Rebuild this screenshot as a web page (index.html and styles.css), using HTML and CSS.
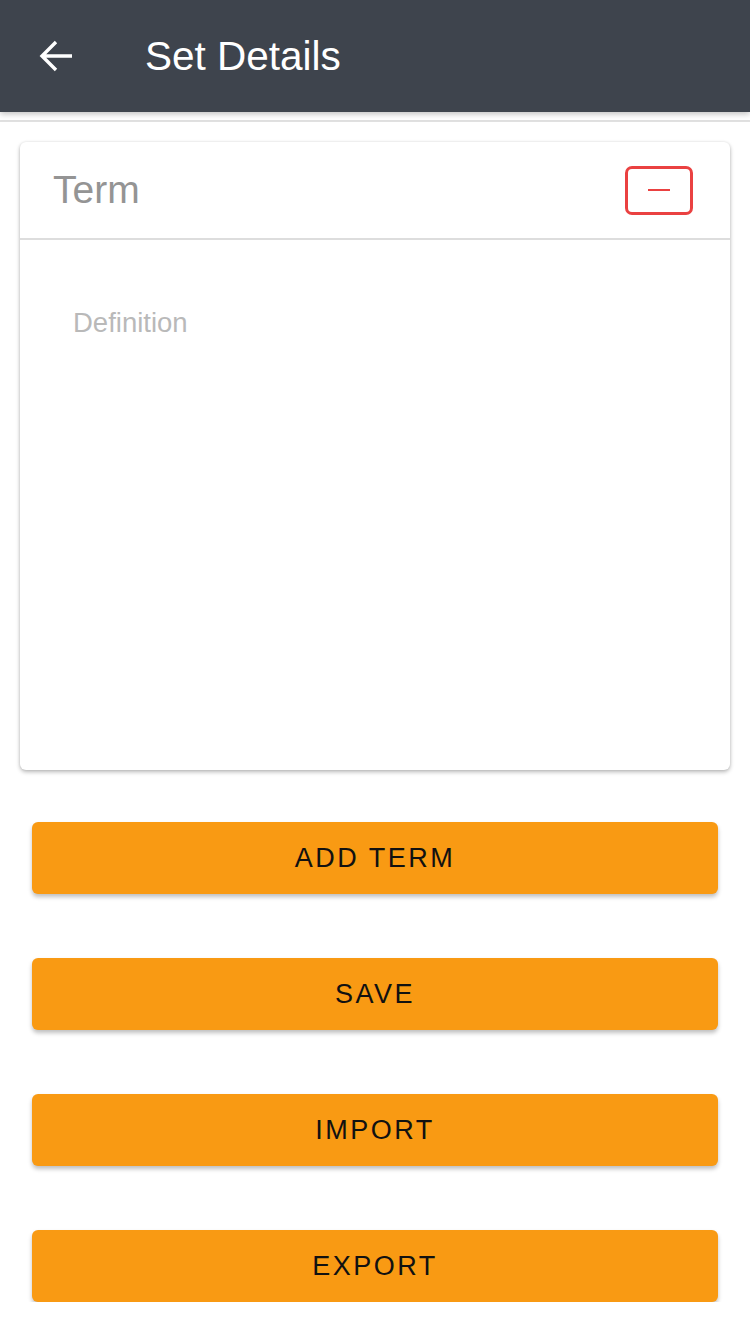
FILE: index.html
```html
<!DOCTYPE html>
<html>
<head>
<meta charset="utf-8">
<link rel="stylesheet" href="styles.css">
</head>
<body>
<header class="topbar">
  <svg class="back" width="34" height="34" viewBox="0 0 34 34">
    <path d="M33 17H3M17 3L3 17L17 31" fill="none" stroke="#fff" stroke-width="3.4" stroke-linecap="butt" stroke-linejoin="miter"/>
  </svg>
  <h1 class="title">Set Details</h1>
</header>
<div class="divider"></div>
<main class="content">
  <section class="card">
    <div class="card-head">
      <span class="term">Term</span>
      <button class="remove"><span class="minus"></span></button>
    </div>
    <div class="card-body">
      <span class="definition">Definition</span>
    </div>
  </section>
  <div class="actions">
    <button class="btn">ADD TERM</button>
    <button class="btn">SAVE</button>
    <button class="btn">IMPORT</button>
    <button class="btn">EXPORT</button>
  </div>
</main>
</body>
</html>
```
FILE: styles.css
```css
html, body {
  margin: 0;
  padding: 0;
  background: #fff;
  font-family: "Liberation Sans", Arial, sans-serif;
}
.topbar {
  height: 112px;
  background: #3e444d;
  display: flex;
  align-items: center;
  padding-left: 39px;
  box-sizing: border-box;
  box-shadow: 0 2px 6px rgba(0,0,0,0.25);
  position: relative;
  z-index: 1;
}
.back {
  display: block;
}
.title {
  margin: 0 0 0 72px;
  color: #fff;
  font-weight: 400;
  font-size: 40.5px;
  line-height: 1;
}
.divider {
  height: 8px;
  border-bottom: 2px solid #e0e0e0;
  box-sizing: content-box;
}
.content {
  padding: 20px 20px 0 20px;
}
.card {
  height: 628px;
  background: #fff;
  border-radius: 6px;
  box-shadow: 0 2px 4px rgba(0,0,0,0.28), 0 0 3px rgba(0,0,0,0.08);
  display: flex;
  flex-direction: column;
}
.card-head {
  height: 96px;
  border-bottom: 2px solid #dddddd;
  display: flex;
  align-items: center;
  justify-content: space-between;
  padding: 0 37px 0 33px;
}
.term {
  font-size: 39px;
  color: #949494;
}
.remove {
  width: 68px;
  height: 49px;
  border: 3.5px solid #ea4141;
  border-radius: 7px;
  background: #fff;
  display: flex;
  align-items: center;
  justify-content: center;
  padding: 0;
  box-sizing: border-box;
}
.minus {
  width: 22px;
  height: 2px;
  background: #ea4141;
}
.card-body {
  padding: 67px 0 0 53px;
}
.definition {
  font-size: 27.5px;
  color: #b9b9b9;
}
.actions {
  display: flex;
  flex-direction: column;
  gap: 64px;
  padding: 52px 12px 0 12px;
}
.btn {
  height: 72px;
  border: none;
  border-radius: 6px;
  background: #f99a13;
  color: #111;
  font-family: "Liberation Sans", Arial, sans-serif;
  font-size: 27px;
  letter-spacing: 2.5px;
  box-shadow: 0 3px 4px rgba(0,0,0,0.25);
  padding: 0;
}
```
